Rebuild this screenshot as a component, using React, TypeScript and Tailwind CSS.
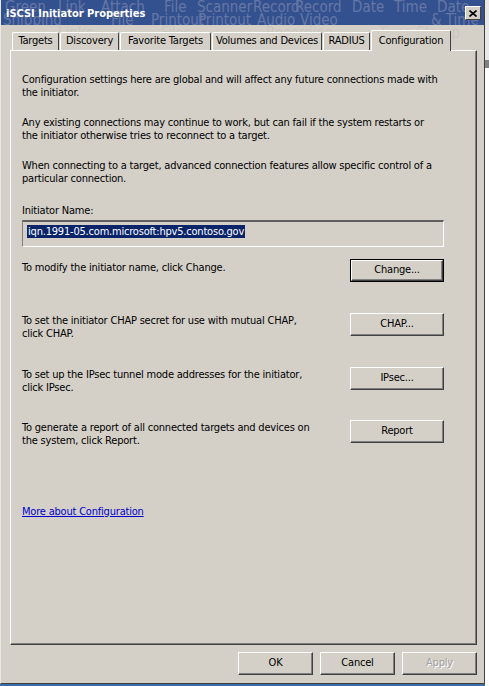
import React from 'react';

const font = "font-['DejaVu_Sans_Condensed','DejaVu_Sans',sans-serif] tracking-[-0.2px]";

const tabs: { label: string; w: string }[] = [
  { label: 'Targets', w: 'w-[47px]' },
  { label: 'Discovery', w: 'w-[59px]' },
  { label: 'Favorite Targets', w: 'w-[91px]' },
  { label: 'Volumes and Devices', w: 'w-[110px]' },
  { label: 'RADIUS', w: 'w-[47px]' },
];

const ghostTitle: { text: string; x: number; y: number }[] = [
  { text: 'Green', x: 4, y: -4 },
  { text: 'Snipping', x: 2, y: 9 },
  { text: 'Link', x: 57, y: -4 },
  { text: 'Attach', x: 100, y: -4 },
  { text: 'File', x: 110, y: 9 },
  { text: 'File', x: 163, y: -4 },
  { text: 'Printout', x: 150, y: 9 },
  { text: 'Scanner', x: 196, y: -4 },
  { text: 'Printout', x: 197, y: 9 },
  { text: 'Record', x: 252, y: -4 },
  { text: 'Audio', x: 256, y: 9 },
  { text: 'Record', x: 294, y: -4 },
  { text: 'Video', x: 299, y: 9 },
  { text: 'Date', x: 351, y: -4 },
  { text: 'Time', x: 393, y: -4 },
  { text: 'Date', x: 436, y: -4 },
  { text: '& Time', x: 430, y: 9 },
];

const ghostStrip: { text: string; x: number }[] = [
  { text: 'Links', x: 57 },
  { text: 'Files', x: 160 },
  { text: 'Recording', x: 265 },
  { text: 'Time Stamp', x: 378 },
];

const btn =
  'h-[23px] w-[75px] bg-[#d4d0c8] border border-t-white border-l-white border-r-[#404040] border-b-[#404040] shadow-[inset_-1px_-1px_#808080] text-[11px] flex items-center justify-center';

const Button: React.FC<{ label: string; disabled?: boolean; width?: string }> = ({ label, disabled, width }) => (
  <div className={`${btn} ${width ?? ''} ${disabled ? 'text-[#a0a0a0] [text-shadow:1px_1px_#fff]' : 'text-black'}`}>{label}</div>
);

const Row: React.FC<{ lines: string[]; label: string; isDefault?: boolean; className?: string }> = ({ lines, label, isDefault, className }) => (
  <div className={`flex items-start justify-between w-[422px] h-[23px] ${className ?? ''}`}>
    <p className={`whitespace-nowrap leading-[13px] ${isDefault ? 'pt-[2px]' : 'pt-[1px]'}`}>
      {lines.map((l, i) => (
        <span key={i} className="block">{l}</span>
      ))}
    </p>
    {isDefault ? (
      <div className="h-[23px] w-[94px] border border-black shrink-0">
        <div className="h-full w-full bg-[#d4d0c8] border border-t-white border-l-white border-r-[#404040] border-b-[#404040] shadow-[inset_-1px_-1px_#808080] flex items-center justify-center">
          {label}
        </div>
      </div>
    ) : (
      <Button label={label} width="!w-[94px] shrink-0" />
    )}
  </div>
);

export default function App() {
  return (
    <div className={`relative w-[489px] h-[686px] overflow-hidden bg-[#3a6ea5] ${font} text-[11px] text-black`}>
      {/* desktop content showing past the window edge */}
      <div className="absolute right-0 top-0 w-[4px] h-[686px] bg-white">
        <div className="h-[60px] bg-[#e8e8e8]" />
        <div className="h-[8px] bg-[#808080]" />
      </div>

      <div className="relative w-[485px] h-[684px] bg-[#d4d0c8] border-l border-l-[#e8e8e8] border-r border-r-[#404040] border-b border-b-[#404040] flex flex-col">
        {/* title bar */}
        <div className="relative h-[25px] bg-[#34518f] overflow-hidden shrink-0">
          {ghostTitle.map((g, i) => (
            <span key={i} className="absolute text-[15px] tracking-normal text-[#6577a6] whitespace-nowrap" style={{ left: g.x, top: g.y }}>
              {g.text}
            </span>
          ))}
          <span className="absolute left-[5px] top-[6px] font-bold text-[11px] tracking-normal text-white whitespace-nowrap">iSCSI Initiator Properties</span>
          <div className="absolute left-[464px] top-[6px] w-[16px] h-[14px] bg-[#d4d0c8] border border-t-white border-l-white border-r-[#404040] border-b-[#404040] flex items-center justify-center">
            <svg width="8" height="7" viewBox="0 0 8 7">
              <path d="M0.5 0.5 L7.5 6.5 M7.5 0.5 L0.5 6.5" stroke="black" strokeWidth="1.6" />
            </svg>
          </div>
        </div>

        {/* tab strip */}
        <div className="relative h-[25px] shrink-0">
          {ghostStrip.map((g, i) => (
            <span key={i} className="absolute top-[-3px] text-[15px] tracking-normal text-[#cbc7bf] whitespace-nowrap" style={{ left: g.x }}>
              {g.text}
            </span>
          ))}
          <div className="absolute left-[11px] bottom-0 flex items-end gap-[1px]">
            {tabs.map((t) => (
              <div
                key={t.label}
                className={`${t.w} h-[18px] bg-[#d4d0c8] border-t border-l border-t-white border-l-white border-r border-r-[#404040] rounded-t-[2px] flex items-center justify-center whitespace-nowrap`}
              >
                {t.label}
              </div>
            ))}
            <div className="relative z-10 w-[80px] h-[21px] -mb-[1px] bg-[#d4d0c8] border-t border-l border-t-white border-l-white border-r border-r-[#404040] rounded-t-[2px] flex items-start justify-center pt-[2px] whitespace-nowrap">
              Configuration
            </div>
          </div>
        </div>

        {/* tab panel */}
        <div className="ml-[9px] mr-[7px] h-[595px] shrink-0 border-t border-l border-t-white border-l-white border-r border-b border-r-[#404040] border-b-[#404040] shadow-[inset_-1px_-1px_#808080] px-[11px] pt-[22px]">
          <p className="whitespace-nowrap leading-[13px]">
            <span className="block">Configuration settings here are global and will affect any future connections made with</span>
            <span className="block">the initiator.</span>
          </p>
          <p className="whitespace-nowrap leading-[13px] mt-[17px]">
            <span className="block">Any existing connections may continue to work, but can fail if the system restarts or</span>
            <span className="block">the initiator otherwise tries to reconnect to a target.</span>
          </p>
          <p className="whitespace-nowrap leading-[13px] mt-[17px]">
            <span className="block">When connecting to a target, advanced connection features allow specific control of a</span>
            <span className="block">particular connection.</span>
          </p>

          <p className="leading-[13px] mt-[19px]">Initiator Name:</p>
          <div className="mt-[3px] h-[27px] w-[422px] bg-[#d4d0c8] border-t-2 border-l border-t-[#606060] border-l-[#808080] border-r border-b border-r-white border-b-white pl-[4px] pt-[2px]">
            <span className="bg-[#0a246a] text-white leading-[13px] inline-block px-[1px]">iqn.1991-05.com.microsoft:hpv5.contoso.gov</span>
          </div>

          <Row className="mt-[12px]" lines={['To modify the initiator name, click Change.']} label="Change..." isDefault />
          <Row className="mt-[31px]" lines={['To set the initiator CHAP secret for use with mutual CHAP,', 'click CHAP.']} label="CHAP..." />
          <Row className="mt-[31px]" lines={['To set up the IPsec tunnel mode addresses for the initiator,', 'click IPsec.']} label="IPsec..." />
          <Row className="mt-[30px]" lines={['To generate a report of all connected targets and devices on', 'the system, click Report.']} label="Report" />

          <a href="#" className="inline-block mt-[62px] text-[#0000cc] underline leading-[13px]">More about Configuration</a>
        </div>

        {/* dialog buttons */}
        <div className="flex justify-end gap-[7px] mr-[7px] mt-[7px]">
          <Button label="OK" />
          <Button label="Cancel" />
          <Button label="Apply" disabled />
        </div>
      </div>
    </div>
  );
}
